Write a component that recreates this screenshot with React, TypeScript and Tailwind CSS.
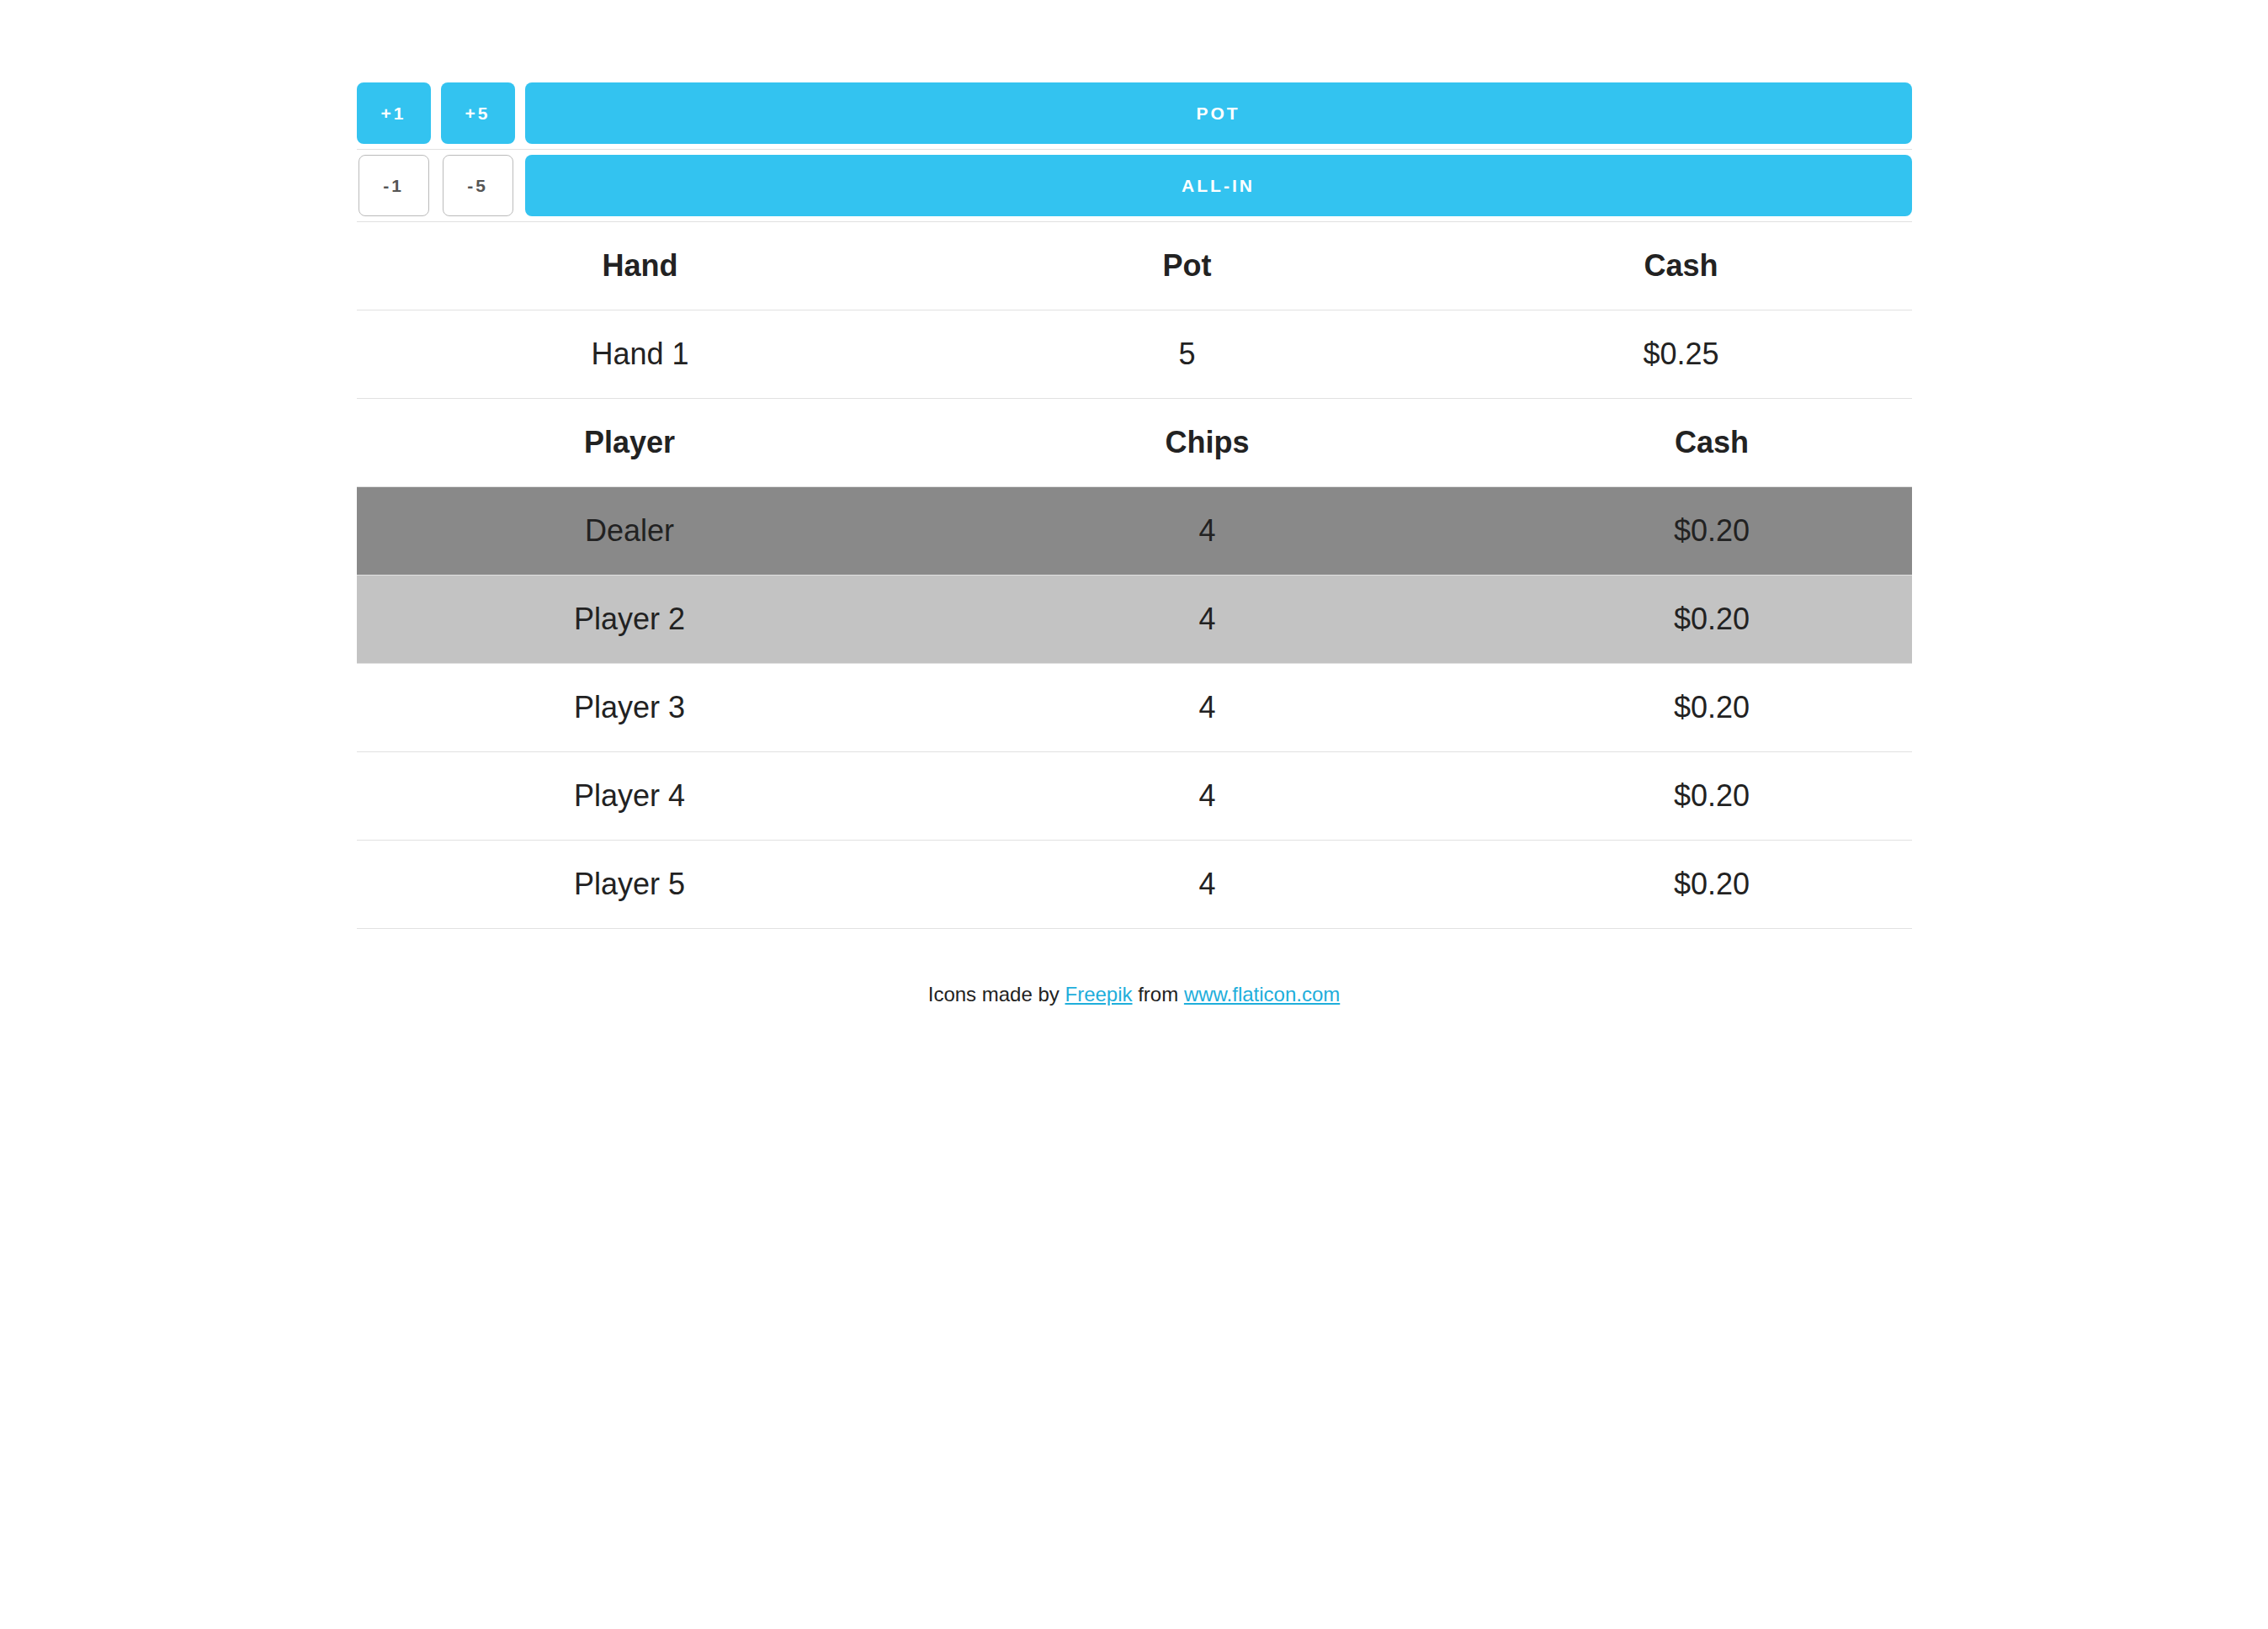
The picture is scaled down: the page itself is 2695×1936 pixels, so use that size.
import React from 'react';

const players = [
  { name: 'Dealer', chips: 4, cash: '$0.20', tone: 'bg-[#898989]' },
  { name: 'Player 2', chips: 4, cash: '$0.20', tone: 'bg-[#c3c3c3]' },
  { name: 'Player 3', chips: 4, cash: '$0.20', tone: '' },
  { name: 'Player 4', chips: 4, cash: '$0.20', tone: '' },
  { name: 'Player 5', chips: 4, cash: '$0.20', tone: '' },
];

const blueBtn =
  'h-[73px] rounded-[8px] bg-[#33c3f0] text-white text-[21px] font-bold tracking-[3px] uppercase flex items-center justify-center';
const plainBtn =
  'h-[73px] rounded-[8px] border border-[#bbbbbb] bg-white text-[#555555] text-[21px] font-bold tracking-[3px] flex items-center justify-center';

const App: React.FC = () => {
  return (
    <div className="min-h-screen bg-white text-[#222222] font-['Liberation_Sans',Arial,sans-serif]">
      <div className="mx-auto w-[1848px] pt-[98px]">
        {/* Bet controls */}
        <div className="flex gap-[12px] pb-[6px] border-b border-[#e1e1e1]">
          <button className={`${blueBtn} w-[88px]`}>+1</button>
          <button className={`${blueBtn} w-[88px]`}>+5</button>
          <button className={`${blueBtn} flex-1`}>Pot</button>
        </div>
        <div className="flex gap-[12px] pt-[6px] pb-[6px] border-b border-[#e1e1e1]">
          <div className="w-[88px] flex justify-center">
            <button className={`${plainBtn} w-[84px]`}>-1</button>
          </div>
          <div className="w-[88px] flex justify-center">
            <button className={`${plainBtn} w-[84px]`}>-5</button>
          </div>
          <button className={`${blueBtn} flex-1`}>All-in</button>
        </div>

        {/* Hand table */}
        <div className="grid grid-cols-[674px_626px_1fr] h-[105px] items-center border-b border-[#e1e1e1] text-[36px] font-bold text-center">
          <div>Hand</div>
          <div>Pot</div>
          <div>Cash</div>
        </div>
        <div className="grid grid-cols-[674px_626px_1fr] h-[105px] items-center border-b border-[#e1e1e1] text-[36px] text-center">
          <div>Hand 1</div>
          <div>5</div>
          <div>$0.25</div>
        </div>

        {/* Players table */}
        <div className="grid grid-cols-[649px_724px_1fr] h-[105px] items-center border-b border-[#e1e1e1] text-[36px] font-bold text-center">
          <div>Player</div>
          <div>Chips</div>
          <div>Cash</div>
        </div>
        {players.map((p) => (
          <div
            key={p.name}
            className={`grid grid-cols-[649px_724px_1fr] h-[105px] items-center border-b border-[#e1e1e1] text-[36px] text-center ${p.tone}`}
          >
            <div>{p.name}</div>
            <div>{p.chips}</div>
            <div>{p.cash}</div>
          </div>
        ))}

        <p className="mt-[59px] text-center text-[24px] leading-[38px]">
          Icons made by{' '}
          <a href="#" className="text-[#1eaedb] underline">Freepik</a>{' '}
          from{' '}
          <a href="#" className="text-[#1eaedb] underline">www.flaticon.com</a>
        </p>
      </div>
    </div>
  );
};

export default App;
